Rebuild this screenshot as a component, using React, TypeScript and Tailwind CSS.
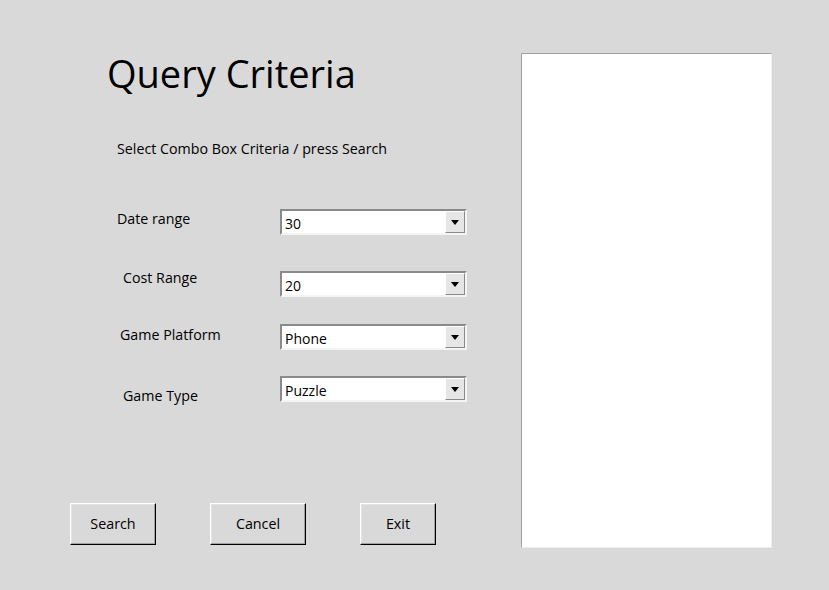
const rows = [
  { label: 'Date range', value: '30', pad: 'pl-[117px]', top: 'mt-0', gap: 'mt-0' },
  { label: 'Cost Range', value: '20', pad: 'pl-[123px]', top: 'mt-[-3px]', gap: 'mt-[36px]' },
  { label: 'Game Platform', value: 'Phone', pad: 'pl-[120px]', top: 'mt-[1px]', gap: 'mt-[27px]' },
  { label: 'Game Type', value: 'Puzzle', pad: 'pl-[123px]', top: 'mt-[10px]', gap: 'mt-[26px]' },
];

function Combo({ value }: { value: string }) {
  return (
    <div className="flex h-[26px] w-[187px] border-2 border-t-[#8a8a8a] border-l-[#8a8a8a] border-b-[#f4f4f4] border-r-[#f4f4f4] bg-white">
      <div className="flex-1 pl-[3px] text-[14px] leading-[24px] text-black pt-[1px]">{value}</div>
      <div className="w-[20px] flex items-center justify-center bg-[#e6e6e6] border border-t-white border-l-white border-b-[#8a8a8a] border-r-[#8a8a8a]">
        <svg width="8" height="5" viewBox="0 0 8 5">
          <path d="M0 0 H8 L4 5 Z" fill="#000" />
        </svg>
      </div>
    </div>
  );
}

function Btn({ label, w }: { label: string; w: string }) {
  return (
    <button
      className={`${w} h-[42px] bg-[#d9d9d9] border border-t-white border-l-white border-b-black border-r-black shadow-[inset_-1px_-1px_0_#a0a0a0,inset_1px_1px_0_#e3e3e3] text-[14.3px] text-black`}
    >
      {label}
    </button>
  );
}

export default function App() {
  return (
    <div className="w-[829px] h-[590px] bg-[#d9d9d9] flex font-['Open_Sans',sans-serif] text-black">
      <div className="w-[521px] flex flex-col">
        <h1 className="pl-[107px] pt-[49px] text-[38px] leading-[48px] tracking-[0px]">Query Criteria</h1>
        <p className="pl-[117px] mt-[42px] text-[14.25px] leading-[20px]">Select Combo Box Criteria / press Search</p>

        <div className="mt-[50px] flex flex-col">
          {rows.map((r) => (
            <div key={r.label} className={`flex ${r.gap}`}>
              <div className={`w-[280px] ${r.pad} ${r.top} text-[14.25px] leading-[20px]`}>{r.label}</div>
              <Combo value={r.value} />
            </div>
          ))}
        </div>

        <div className="mt-[97px] pl-[70px] flex gap-[54px]">
          <Btn label="Search" w="w-[86px]" />
          <Btn label="Cancel" w="w-[96px]" />
          <Btn label="Exit" w="w-[76px]" />
        </div>
      </div>

      <div className="mt-[53px] w-[251px] h-[495px] bg-white border border-t-[#a0a0a0] border-l-[#a0a0a0] border-b-[#ececec] border-r-[#ececec]" />
    </div>
  );
}
